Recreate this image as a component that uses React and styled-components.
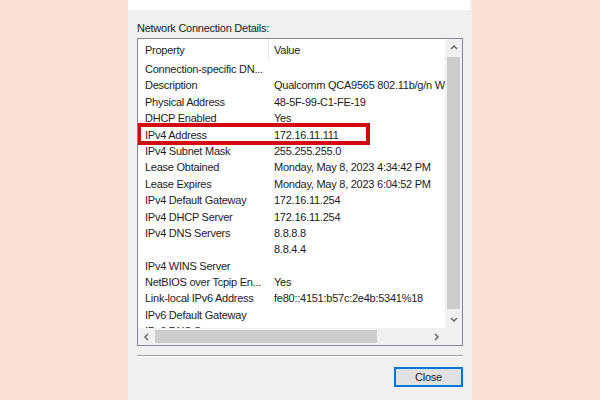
import React from 'react'
import styled, { createGlobalStyle } from 'styled-components'

const GlobalStyle = createGlobalStyle`
    body {
        margin: 0;
        background: #fbe2d9;
        font-family: "Liberation Sans", Arial, sans-serif;
        font-size: 11px;
        letter-spacing: -0.25px;
        color: #1b1b1b;
    }
`

const rows = [
    ['Connection-specific DN...', ''],
    ['Description', 'Qualcomm QCA9565 802.11b/g/n Wireless Network Adapter'],
    ['Physical Address', '48-5F-99-C1-FE-19'],
    ['DHCP Enabled', 'Yes'],
    ['IPv4 Address', '172.16.11.111', true],
    ['IPv4 Subnet Mask', '255.255.255.0'],
    ['Lease Obtained', 'Monday, May 8, 2023 4:34:42 PM'],
    ['Lease Expires', 'Monday, May 8, 2023 6:04:52 PM'],
    ['IPv4 Default Gateway', '172.16.11.254'],
    ['IPv4 DHCP Server', '172.16.11.254'],
    ['IPv4 DNS Servers', '8.8.8.8'],
    ['', '8.8.4.4'],
    ['IPv4 WINS Server', ''],
    ['NetBIOS over Tcpip En...', 'Yes'],
    ['Link-local IPv6 Address', 'fe80::4151:b57c:2e4b:5341%18'],
    ['IPv6 Default Gateway', ''],
    ['IPv6 DNS Server', ''],
]

const Chevron = ({ dir }) => {
    const paths = {
        up: 'M1 5 L4 2 L7 5',
        down: 'M1 2 L4 5 L7 2',
        left: 'M5 1 L2 4 L5 7',
        right: 'M2 1 L5 4 L2 7',
    }
    return (
        <svg width="8" height="8" viewBox="0 0 8 8">
            <path d={paths[dir]} fill="none" stroke="#606060" strokeWidth="1.4" />
        </svg>
    )
}

export default function App() {
    return (
        <Page>
            <GlobalStyle />
            <Dialog>
                <TopPanel />
                <Content>
                    <Label>Network Connection Details:</Label>
                    <ListBox>
                        <Viewport>
                            <Header>
                                <HeadCell>Property</HeadCell>
                                <HeadCell $value>Value</HeadCell>
                            </Header>
                            {rows.map(([prop, val, hl], i) => (
                                <Row key={i} $highlight={hl}>
                                    <PropCell>{prop}</PropCell>
                                    <ValueCell>{val}</ValueCell>
                                </Row>
                            ))}
                        </Viewport>
                        <VScroll>
                            <ArrowBox><Chevron dir="up" /></ArrowBox>
                            <VTrack><VThumb /></VTrack>
                            <ArrowBox><Chevron dir="down" /></ArrowBox>
                        </VScroll>
                        <HScroll>
                            <ArrowBox><Chevron dir="left" /></ArrowBox>
                            <HTrack><HThumb /></HTrack>
                            <ArrowBox><Chevron dir="right" /></ArrowBox>
                        </HScroll>
                        <Corner />
                    </ListBox>
                    <Separator />
                    <Footer>
                        <CloseButton>Close</CloseButton>
                    </Footer>
                </Content>
            </Dialog>
        </Page>
    )
}

const Page = styled.div`
    display: flex;
    justify-content: center;
    height: 400px;
    overflow: hidden;
`

const Dialog = styled.div`
    width: 344px;
    background: #f0f0f0;
    display: flex;
    flex-direction: column;
`

const TopPanel = styled.div`
    height: 10px;
    background: #ffffff;
    margin-right: 2px;
`

const Content = styled.div`
    padding: 0 9px;
    display: flex;
    flex-direction: column;
`

const Label = styled.div`
    margin-top: 11px;
    line-height: 14px;
    margin-bottom: 3px;
`

const ListBox = styled.div`
    height: 306px;
    border: 1px solid #828790;
    background: #ffffff;
    display: grid;
    grid-template-columns: 1fr 17px;
    grid-template-rows: 1fr 17px;
`

const Viewport = styled.div`
    overflow: hidden;
    min-width: 0;
`

const Header = styled.div`
    display: flex;
    height: 22px;
    align-items: center;
`

const HeadCell = styled.div`
    width: ${p => (p.$value ? 'auto' : '131px')};
    height: 100%;
    display: flex;
    align-items: center;
    box-sizing: border-box;
    padding-left: ${p => (p.$value ? '5px' : '7px')};
    border-right: ${p => (p.$value ? 'none' : '1px solid #e5e5e5')};
`

const Row = styled.div`
    position: relative;
    display: flex;
    height: 16.4px;
    line-height: 16.4px;
    white-space: nowrap;

    &::after {
        content: '';
        display: ${p => (p.$highlight ? 'block' : 'none')};
        position: absolute;
        left: -1px;
        top: -4px;
        width: 233px;
        height: 22px;
        border: 4px solid #d20a11;
        box-sizing: border-box;
    }
`

const PropCell = styled.div`
    width: 131px;
    flex-shrink: 0;
    box-sizing: border-box;
    padding-left: 7px;
    overflow: hidden;
`

const ValueCell = styled.div`
    padding-left: 5px;
`

const VScroll = styled.div`
    background: #f0f0f0;
    display: flex;
    flex-direction: column;
`

const ArrowBox = styled.div`
    width: 17px;
    height: 17px;
    flex-shrink: 0;
    display: flex;
    align-items: center;
    justify-content: center;
`

const VTrack = styled.div`
    flex: 1;
    padding: 1px 1px;
    display: flex;
    flex-direction: column;
`

const VThumb = styled.div`
    background: #cdcdcd;
    height: 252px;
    margin: 0 1px;
`

const HScroll = styled.div`
    background: #f0f0f0;
    display: flex;
`

const HTrack = styled.div`
    flex: 1;
    padding: 1px 0;
    display: flex;
`

const HThumb = styled.div`
    background: #cdcdcd;
    width: 222px;
    margin: 1px 0;
`

const Corner = styled.div`
    background: #f0f0f0;
`

const Separator = styled.div`
    margin-top: 9px;
    height: 1px;
    background: #a0a0a0;
    border-bottom: 1px solid #ffffff;
`

const Footer = styled.div`
    display: flex;
    justify-content: flex-end;
    margin-top: 10px;
`

const CloseButton = styled.button`
    width: 69px;
    height: 20px;
    background: #e1e1e1;
    border: 1px solid #0078d7;
    box-shadow: inset 0 0 0 1px #0078d7;
    font-family: "Liberation Sans", Arial, sans-serif;
    font-size: 11px;
    letter-spacing: -0.25px;
    color: #1b1b1b;
    padding: 0;
`
